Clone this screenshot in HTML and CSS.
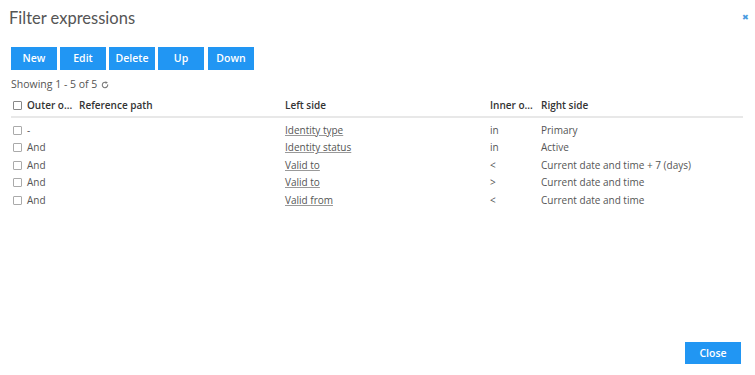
FILE: index.html
```html
<!DOCTYPE html>
<html lang="en">

<head>
    <meta charset="UTF-8">
    <meta name="viewport" content="width=device-width, initial-scale=1.0">
    <title>Filter expressions</title>
    <link rel="stylesheet" href="styles.css">
</head>

<body>
    <div class="dialog">
        <div class="head">
            <h1 class="title">Filter expressions</h1>
            <a href="javascript:;" class="close_x">&#x2716;</a>
        </div>

        <div class="toolbar">
            <a href="javascript:;" class="btn">New</a>
            <a href="javascript:;" class="btn">Edit</a>
            <a href="javascript:;" class="btn">Delete</a>
            <a href="javascript:;" class="btn">Up</a>
            <a href="javascript:;" class="btn">Down</a>
        </div>

        <div class="paging">
            Showing 1 - 5 of 5
            <svg class="reload" width="8" height="8" viewBox="0 0 10 10">
                <path d="M8.3 4.2A3.4 3.4 0 1 1 6.6 2" fill="none" stroke="#777" stroke-width="1.3"/>
                <path d="M5.6 0.4 L8.6 1.9 L5.8 3.6 Z" fill="#777"/>
            </svg>
        </div>

        <table class="grid">
            <thead>
                <tr>
                    <th class="c_chk"><span class="chk"></span></th>
                    <th class="c_outer">Outer o...</th>
                    <th class="c_ref">Reference path</th>
                    <th class="c_left">Left side</th>
                    <th class="c_inner">Inner o...</th>
                    <th class="c_right">Right side</th>
                </tr>
            </thead>
            <tbody>
                <tr>
                    <td><span class="chk"></span></td>
                    <td>-</td>
                    <td></td>
                    <td><a href="javascript:;">Identity type</a></td>
                    <td>in</td>
                    <td>Primary</td>
                </tr>
                <tr>
                    <td><span class="chk"></span></td>
                    <td>And</td>
                    <td></td>
                    <td><a href="javascript:;">Identity status</a></td>
                    <td>in</td>
                    <td>Active</td>
                </tr>
                <tr>
                    <td><span class="chk"></span></td>
                    <td>And</td>
                    <td></td>
                    <td><a href="javascript:;">Valid to</a></td>
                    <td>&lt;</td>
                    <td>Current date and time + 7 (days)</td>
                </tr>
                <tr>
                    <td><span class="chk"></span></td>
                    <td>And</td>
                    <td></td>
                    <td><a href="javascript:;">Valid to</a></td>
                    <td>&gt;</td>
                    <td>Current date and time</td>
                </tr>
                <tr>
                    <td><span class="chk"></span></td>
                    <td>And</td>
                    <td></td>
                    <td><a href="javascript:;">Valid from</a></td>
                    <td>&lt;</td>
                    <td>Current date and time</td>
                </tr>
            </tbody>
        </table>

        <div class="foot">
            <a href="javascript:;" class="btn btn_close">Close</a>
        </div>
    </div>
</body>

</html>
```

FILE: styles.css
```css
* {
    margin: 0;
    padding: 0;
    box-sizing: border-box;
}

html,
body {
    height: 100%;
    background-color: #fff;
}

body {
    font-family: "Open Sans", "Liberation Sans", sans-serif;
    font-size: 10px;
    color: #555;
}

.dialog {
    display: flex;
    flex-direction: column;
    height: 375px;
    padding: 0 12px 0 11px;
}

.head {
    position: relative;
    height: 40px;
}

.title {
    font-family: Lato, "Open Sans", sans-serif;
    font-size: 16.5px;
    font-weight: 400;
    color: #555;
    line-height: 20px;
    padding-top: 8px;
    margin-left: -2px;
}

.close_x {
    position: absolute;
    right: -6px;
    top: 11px;
    font-size: 8px;
    color: #4a9be0;
    text-decoration: none;
}

.toolbar {
    display: flex;
    gap: 3px;
    margin-top: 7px;
}

.btn {
    display: block;
    width: 46px;
    height: 23px;
    line-height: 23px;
    text-align: center;
    background-color: #2196f3;
    color: #fff;
    font-weight: 600;
    font-size: 10.5px;
    text-decoration: none;
}

.toolbar .btn:nth-child(4) {
    margin-right: 1px;
}

.paging {
    margin-top: 6px;
    line-height: 16px;
    font-size: 10.5px;
    color: #555;
}

.reload {
    vertical-align: -1px;
    margin-left: 1px;
}

.grid {
    margin-top: 1px;
    width: 732px;
    border-collapse: collapse;
    table-layout: fixed;
}

.grid th {
    text-align: left;
    font-weight: 600;
    color: #333;
    height: 24px;
    vertical-align: middle;
    border-bottom: 2px solid #e8e8e8;
    padding-top: 1px;
}

.grid td {
    height: 17.6px;
    line-height: 17px;
    vertical-align: middle;
    color: #555;
}

.grid tbody tr:first-child td {
    padding-top: 4px;
    height: 21px;
}

.grid td a {
    color: #555;
    text-decoration: underline;
    text-decoration-color: #999;
}

.c_chk {
    width: 16px;
}

.c_outer {
    width: 52px;
}

.c_ref {
    width: 206px;
}

.c_left {
    width: 205px;
}

.c_inner {
    width: 51px;
}

.chk {
    display: inline-block;
    width: 9px;
    height: 9px;
    border: 1px solid #888;
    border-radius: 1px;
    margin-left: 2px;
    vertical-align: -1px;
}

.grid tbody .chk {
    border-color: #aaa;
}

.foot {
    margin-top: auto;
    display: flex;
    justify-content: flex-end;
    padding-bottom: 11px;
}

.btn_close {
    width: 56px;
    height: 22px;
    line-height: 22px;
    margin-right: 2px;
}
```
